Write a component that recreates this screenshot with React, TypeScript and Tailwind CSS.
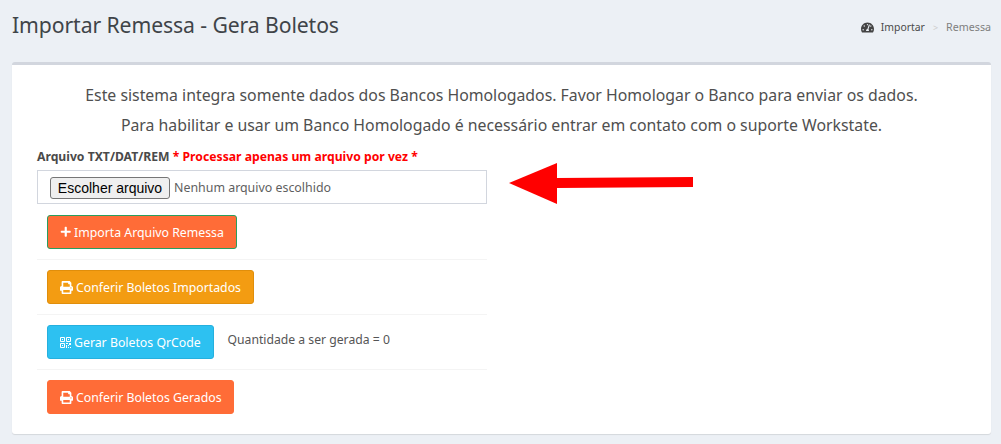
import React from 'react';
import { FaPlus, FaPrint, FaTachometerAlt } from 'react-icons/fa';

const btn =
  'inline-flex items-center h-[34px] pl-[12px] pt-[2px] rounded-[3px] border text-white text-[12.3px] leading-none whitespace-nowrap';

const QrIcon: React.FC = () => (
  <svg className="w-[11px] h-[11px] mr-[3px] -mt-[2px]" viewBox="0 0 11 11" fill="none">
    <path d="M.5.5h4v4h-4zM6.5.5h4v4h-4zM.5 6.5h4v4h-4z" stroke="currentColor" />
    <path d="M2 2h1v1H2zM8 2h1v1H8zM2 8h1v1H2zM6 6h2v1H6zM9 6h2v2H9zM6 8h1v3H6zM8 8h1v1H8zM8 10h1v1H8zM10 10h1v1h-1z" fill="currentColor" />
  </svg>
);

const App: React.FC = () => {
  return (
    <div className="relative w-[1001px] h-[444px] overflow-hidden bg-[#ecf0f5] text-[#444] font-['Noto_Sans',sans-serif]">
      <div className="flex items-start justify-between h-[62px] pl-[12px] pr-[10px]">
        <h1 className="mt-[10px] text-[21.2px] leading-[30px] tracking-[-0.1px] text-[#3f4448]">
          Importar Remessa - Gera Boletos
        </h1>
        <div className="flex items-center mt-[19px] text-[10.7px] leading-[17px]">
          <FaTachometerAlt className="w-[13px] h-[13px] text-[#444] mr-[7px]" />
          <span className="text-[#4a4a4a] text-[10.4px]">Importar</span>
          <span className="mx-[8px] text-[#ccc] text-[9px]">&gt;</span>
          <span className="text-[#808080]">Remessa</span>
        </div>
      </div>

      <div className="relative mx-[12px] w-[979px] h-[372px] bg-white rounded-[3px] border-t-[3px] border-[#d2d6de] shadow-[0_1px_1px_rgba(0,0,0,0.1)] pt-[15px] px-[25px]">
        <p className="text-center text-[15.83px] leading-[30px] text-[#4f4f4f]">
          Este sistema integra somente dados dos Bancos Homologados. Favor Homologar o Banco para enviar os dados.
        </p>
        <p className="text-center text-[15.83px] leading-[30px] text-[#4f4f4f]">
          Para habilitar e usar um Banco Homologado é necessário entrar em contato com o suporte Workstate.
        </p>

        <div className="w-[450px] mt-[8px]">
          <div className="text-[12.2px] leading-[18px] font-bold text-[#4a4a4a]">
            Arquivo TXT/DAT/REM <span className="text-[#ff0000]">* Processar apenas um arquivo por vez *</span>
          </div>
          <div className="flex items-center h-[34px] mt-[4px] pt-[2px] border border-[#d2d6de] pl-[12px]">
            <span className="flex items-center justify-center w-[120px] h-[22px] bg-[#efefef] border border-[#767676] rounded-[3px] text-[14px] text-black font-['Liberation_Sans',sans-serif]">
              Escolher arquivo
            </span>
            <span className="ml-[4px] text-[12.4px] text-[#5f5f5f]">Nenhum arquivo escolhido</span>
          </div>

          <div className="pt-[11px] pb-[10px] pl-[10px] border-b border-[#f4f4f4]">
            <button className={`${btn} w-[190px] bg-[#ff6c37] border-[#2a9d5f]`}>
              <FaPlus className="w-[11.5px] h-[11.5px] mr-[2.5px] -mt-[2px]" />
              Importa Arquivo Remessa
            </button>
          </div>
          <div className="pt-[10px] pb-[10px] pl-[10px] border-b border-[#f4f4f4]">
            <button className={`${btn} w-[207px] bg-[#f39c12] border-[#e08e0b]`}>
              <FaPrint className="w-[13px] h-[13px] mr-[3px] -mt-[2px]" />
              Conferir Boletos Importados
            </button>
          </div>
          <div className="flex items-center pt-[10px] pb-[10px] pl-[10px] border-b border-[#f4f4f4]">
            <button className={`${btn} w-[167px] bg-[#2dc1f1] border-[#25b0de]`}>
              <QrIcon />
              Gerar Boletos QrCode
            </button>
            <span className="ml-[13.5px] mb-[3px] text-[12.2px] text-[#555]">Quantidade a ser gerada = 0</span>
          </div>
          <div className="pt-[10px] pl-[10px]">
            <button className={`${btn} w-[187px] bg-[#ff6c37] border-[#ff6c37]`}>
              <FaPrint className="w-[13px] h-[13px] mr-[3px] -mt-[2px]" />
              Conferir Boletos Gerados
            </button>
          </div>
        </div>

        <svg className="absolute left-[497px] top-[98px]" width="184" height="44" viewBox="0 0 184 44">
          <polygon points="0,20 48,0 48,41" fill="#ff0000" />
          <polygon points="48,15 184,14 184,24 48,25" fill="#ff0000" />
        </svg>
      </div>
    </div>
  );
};

export default App;
